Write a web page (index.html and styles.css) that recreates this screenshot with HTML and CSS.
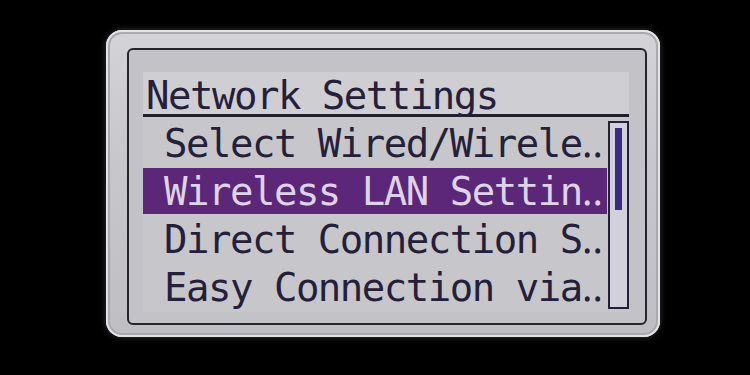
FILE: index.html
```html
<!DOCTYPE html>
<html>
<head>
<meta charset="utf-8">
<link rel="stylesheet" href="styles.css">
</head>
<body>
<div class="stage">
  <div class="bezel">
    <div class="lcd">
      <div class="panel">
        <div class="header"><span class="title">Network Settings</span></div>
        <div class="body">
          <ul class="list">
            <li class="row">Select Wired/Wirele‥</li>
            <li class="row selected">Wireless LAN Settin‥</li>
            <li class="row">Direct Connection S‥</li>
            <li class="row">Easy Connection via‥</li>
          </ul>
          <div class="scrollbar"><div class="thumb"></div></div>
        </div>
      </div>
    </div>
  </div>
</div>
</body>
</html>
```
FILE: styles.css
```css
html, body {
  margin: 0;
  padding: 0;
  background: #000;
}
.stage {
  width: 750px;
  height: 375px;
  box-sizing: border-box;
  padding: 30px 0 0 106px;
  display: flex;
  align-items: flex-start;
}
.bezel {
  width: 554px;
  height: 307px;
  box-sizing: border-box;
  border-radius: 16px;
  background: linear-gradient(180deg, #d4d4d8 0%, #c8c8cc 40%, #bebec3 100%);
  box-shadow: inset 0 0 0 2px #e4e4e8, inset 0 0 0 4px #a9a9ae, 0 0 6px rgba(140,140,150,0.4);
  padding: 18px 14px 12px 21px;
  display: flex;
}
.lcd {
  flex: 1;
  box-sizing: border-box;
  border: 2px solid #26242c;
  border-radius: 6px;
  background: #c2c2c7;
  padding: 22px 16px 10px 14px;
  display: flex;
  flex-direction: column;
}
.panel {
  display: flex;
  flex-direction: column;
  font-family: "DejaVu Sans Mono", "Liberation Mono", monospace;
  font-size: 39px;
  letter-spacing: -1.5px;
  color: #25203a;
}
.header {
  height: 45px;
  box-sizing: border-box;
  background: #cfcfd3;
  border-bottom: 3px solid #221f2c;
  padding-left: 3px;
  display: flex;
  align-items: center;
  line-height: 1;
}
.title {
  position: relative;
  top: 2px;
}
.body {
  display: flex;
  gap: 1px;
  padding-top: 3px;
  background: #c7c7cb;
  height: 192px;
}
.list {
  list-style: none;
  margin: 0;
  padding: 0;
  width: 464px;
  display: flex;
  flex-direction: column;
  gap: 2px;
}
.row {
  height: 46px;
  box-sizing: border-box;
  padding-left: 21px;
  display: flex;
  align-items: center;
  line-height: 1;
  white-space: nowrap;
  overflow: hidden;
}
.row.selected {
  background: #5c2679;
  color: #ddd4e6;
}
.scrollbar {
  width: 21px;
  height: 188px;
  box-sizing: border-box;
  border: 2px solid #25203a;
  margin-top: 1px;
  padding: 5px 5px 0 5px;
  background: #d2d0da;
}
.thumb {
  height: 82px;
  background: #3b2d82;
}
```
